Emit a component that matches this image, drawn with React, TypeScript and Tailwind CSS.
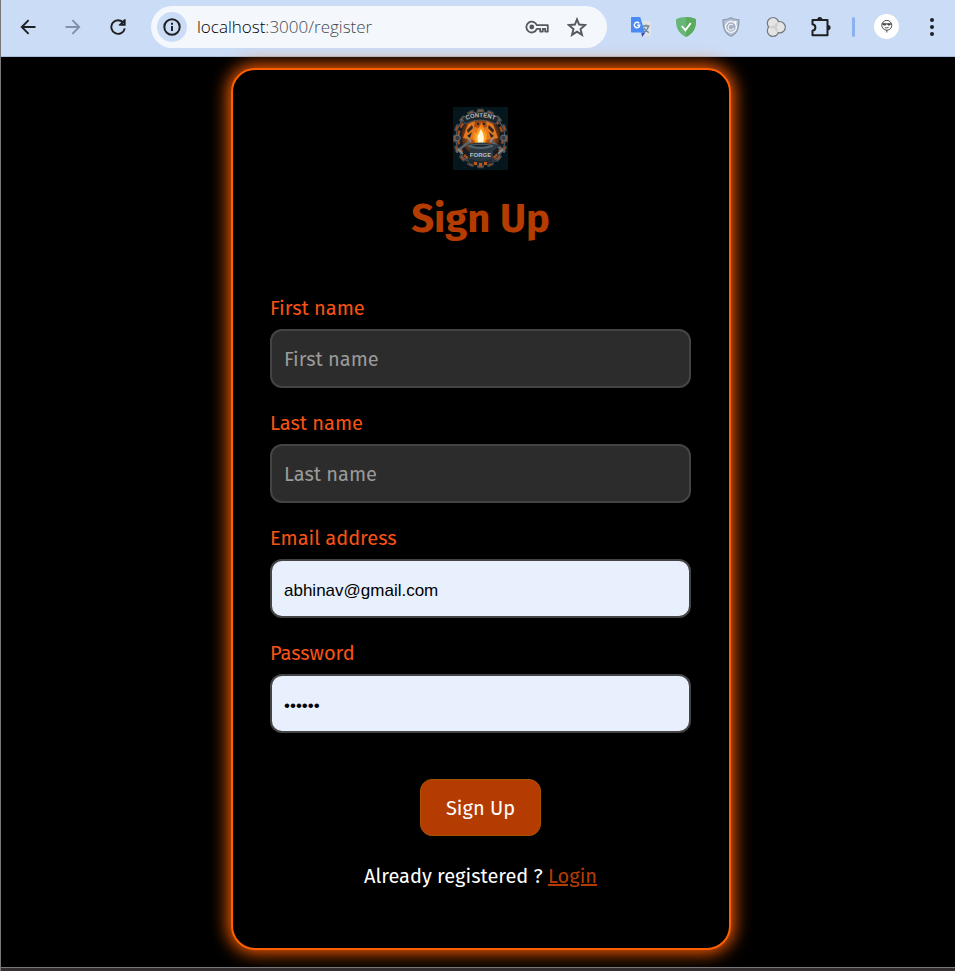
import React, { useState } from "react";

const uiFont = "font-['Fira_Sans','Noto_Sans_CJK_SC','Noto_Sans',sans-serif]";

function ArrowIcon({ flip = false }: { flip?: boolean }) {
  return (
    <svg viewBox="0 0 16 16" className={flip ? "size-4 rotate-180" : "size-4"} fill="none" stroke="currentColor" strokeWidth="1.9">
      <path d="M15.5 8H2M8.6 1.2 1.8 8l6.8 6.8" />
    </svg>
  );
}

function ReloadIcon() {
  return (
    <svg viewBox="0 0 16 16" className="size-4" fill="none" stroke="currentColor" strokeWidth="1.9">
      <path d="M13.6 4A6.8 6.8 0 1 0 14.8 9.4" />
      <path d="M14.7.3v5.6H9.2M14.5 5.7 10.5 5.5 14.5 1.5" />
    </svg>
  );
}

function InfoIcon() {
  return (
    <svg viewBox="0 0 18 18" className="size-[18px]" fill="none" stroke="currentColor" strokeWidth="2">
      <circle cx="9" cy="9" r="7.7" />
      <path d="M9 8v5M9 4.8v2" />
    </svg>
  );
}

function KeyIcon() {
  return (
    <svg viewBox="0 0 24 14" className="h-[14px] w-6" fill="none" stroke="currentColor" strokeWidth="1.8">
      <path d="M11.8 5.2h11v6.4h-2.6V8.9h-2.4v2.7h-2.6V8.9h-3.4A5.4 5.4 0 1 1 11.8 5.2Z" strokeLinejoin="round" />
      <circle cx="6.8" cy="7" r="2.4" fill="currentColor" stroke="none" />
    </svg>
  );
}

function StarIcon() {
  return (
    <svg viewBox="0 0 20 20" className="size-5" fill="none" stroke="currentColor" strokeWidth="1.9">
      <path d="m10 2.4 2.1 5.1 6.1.5-4.7 4 1.5 5.8L10 14.6 5 17.8 6.5 12 1.8 8l6.1-.5Z" />
    </svg>
  );
}

function TranslateIcon() {
  return (
    <svg viewBox="0 0 20 20" className="size-5">
      <path d="M8 4h11.2a.8.8 0 0 1 .8.8v14a.8.8 0 0 1-.8.8H13Z" fill="#dfe2e6" />
      <path d="M11.5 9h7M15 7.5V9M17.5 9c-.5 3-2.2 5-4.4 6.500M13 10.800c1 2.200 2.600 3.900 4.800 4.900" fill="none" stroke="#6d8790" strokeWidth="1.3" />
      <path d="M10.2 15.6h4.2l-3.2 4.400Z" fill="#3949ab" />
      <path d="M.8 0h8.4l4.8 15.600H.8a.8.8 0 0 1-.8-.8V.8A.8.8 0 0 1 .8 0Z" fill="#4a8af4" />
      <path d="M8.2 6.4A2.7 2.7 0 1 0 8.7 8.300H6.2" fill="none" stroke="#fff" strokeWidth="1.4" />
    </svg>
  );
}

function GreenShieldIcon() {
  return (
    <svg viewBox="0 0 20 20" className="size-5">
      <path d="M10 0c3.2 0 7 .8 10 2.2 0 7-.8 13.3-10 17.8C.8 15.5 0 9.200 0 2.200 3 .8 6.800 0 10 0Z" fill="#67b778" />
      <path d="M10 0c3.2 0 7 .8 10 2.2 0 7-.8 13.3-10 17.800Z" fill="#5bab5e" />
      <path d="m5.8 9 3.6 4.2L14.8 6" fill="none" stroke="#fff" strokeWidth="1.8" />
    </svg>
  );
}

function GreyShieldIcon() {
  return (
    <svg viewBox="0 0 18 20" className="h-5 w-[18px]">
      <path d="M9 .7c2.5 1.3 5 2 8 2.100 0 7-.8 12.700-8 16.500C1.800 15.500 1 9.800 1 2.800 4 2.700 6.500 2 9 .7Z" fill="#b4bfd2" stroke="#8c99b0" strokeWidth="1.2" />
      <circle cx="9" cy="10" r="5.4" fill="#a3afc2" stroke="#f1f4f9" strokeWidth="1.5" />
      <path d="M10.800 8A2.800 2.800 0 1 0 11.800 10.600" fill="none" stroke="#edf1f7" strokeWidth="1.2" />
      <circle cx="13.4" cy="5.4" r="1.3" fill="#f7f9fc" />
    </svg>
  );
}

function CirclesIcon() {
  return (
    <svg viewBox="0 0 20 20" className="size-5">
      <g fill="#e4e4e4" stroke="#77797c" strokeWidth="1.6">
        <circle cx="7" cy="6.3" r="5.5" />
        <circle cx="7" cy="13.7" r="5.5" />
        <circle cx="13.6" cy="10.3" r="5.5" />
      </g>
      <g fill="#e4e4e4">
        <circle cx="7" cy="6.3" r="5" />
        <circle cx="7" cy="13.7" r="5" />
        <circle cx="13.6" cy="10.3" r="5" />
      </g>
      <path d="M3.5 10c2-1.800 5-1.800 7 0-2 1.800-5 1.800-7 0ZM8.400 8.500c.8-1.600 2-2.600 3.200-2.800.4 1.600 0 3-1.300 4.300ZM8.400 11.700c.8 1.600 2 2.800 3.200 3.100.4-1.600 0-3.300-1.300-4.800Z" fill="#cdcdcd" />
    </svg>
  );
}

function PuzzleIcon() {
  return (
    <svg viewBox="0 0 20 20" className="size-5">
      <path d="M1.500 2.900h15v15.300h-15v-4.400c3.800-.6 3.800-5.900 0-6.500Z" fill="none" stroke="#1f2023" strokeWidth="2" strokeLinejoin="round" />
      <path d="M6.300 2.500a2.500 2.500 0 0 1 5 0ZM17 8a2.600 2.600 0 0 1 0 5.200Z" fill="#1f2023" />
    </svg>
  );
}

function AvatarIcon() {
  return (
    <svg viewBox="0 0 25 25" className="size-[25px]" fill="none" stroke="#222" strokeWidth=".8">
      <circle cx="12.5" cy="12.5" r="12.5" fill="#fff" stroke="none" />
      <ellipse cx="12.8" cy="11.3" rx="5" ry="4.9" />
      <path d="M8.2 9.800h8.900M9 10.200h2.800v.8H9.400ZM13.800 10.200h2.600l-.5.8h-2Z" />
      <path d="M10.800 13.700q2 .6 3.800-.4M12.800 16.200V18.500" />
    </svg>
  );
}

function ForgeLogo() {
  const teeth = Array.from({ length: 16 }, (_, i) => i * 22.5);
  return (
    <svg viewBox="0 0 55 63" className="h-[63px] w-[55px]" role="img" aria-label="Content Forge">
      <defs>
        <radialGradient id="fire" cx="50%" cy="72%" r="65%">
          <stop offset="0" stopColor="#fff6c4" />
          <stop offset=".35" stopColor="#ffb02e" />
          <stop offset="1" stopColor="#ee6a0a" />
        </radialGradient>
        <radialGradient id="glow">
          <stop offset="0" stopColor="#d9640f" />
          <stop offset=".7" stopColor="#9c4512" />
          <stop offset="1" stopColor="#3a2417" />
        </radialGradient>
        <path id="topArc" d="M11 14Q27.500 6.500 44 14" />
      </defs>
      <rect width="55" height="63" fill="#06161d" />
      <g transform="translate(27.500 31.500) scale(1 1.080) translate(-27.500 -31)">
        {teeth.map((a) => (
          <g key={a} transform={`rotate(${a} 27.500 31)`}>
            <rect x="24" y="3.500" width="7" height="6" rx="1" fill="#3c464d" />
            <rect x="25.500" y="4.500" width="4" height="3" fill="#a54c1a" />
          </g>
        ))}
        <circle cx="27.5" cy="31" r="24.5" fill="#171d22" stroke="#4c565d" strokeWidth="1.2" />
        <circle cx="27.5" cy="31" r="22.3" fill="none" stroke="#a54c1a" strokeWidth="2.4" strokeDasharray="5 3" />
      </g>
      <ellipse cx="27.5" cy="29" rx="19.5" ry="20" fill="url(#glow)" />
      <path d="M10 31l5-14 7-3-1 6 5 1-5 12ZM45 31l-5-14-7-3 1 6-5 1 5 12Z" fill="#e5761b" />
      <path d="M14 23l5-5 1 3-5 5ZM41 23l-5-5-1 3 5 5ZM14 29l5-4-2 6ZM41 29l-5-4 2 6Z" fill="#2b2723" />
      <path d="M24 16h2v2h-2ZM30 16h2v2h-2Z" fill="#1d262c" />
      <path d="M9 11Q27.500-2 46 11L43 17Q27.500 9 12 17Z" fill="#1d262c" stroke="#59656c" strokeWidth=".7" />
      <text fontSize="6" fontWeight="700" fill="#b4bcc0" className="font-['Liberation_Sans',sans-serif]">
        <textPath href="#topArc" startOffset="50%" textAnchor="middle">CONTENT</textPath>
      </text>
      <path d="M3 45 17 34M52 45 38 34" stroke="#59646b" strokeWidth="2.4" />
      <path d="M5 42l5 5M50 42l-5 5M14 30l4 5M41 30l-4 5" stroke="#8b9295" strokeWidth="1.6" />
      <circle cx="4.5" cy="31" r="2.8" fill="#343d43" stroke="#68737a" />
      <circle cx="50.5" cy="31" r="2.8" fill="#343d43" stroke="#68737a" />
      <path d="M28 14c1 5 4 6 3 11l3-3c1 6 1 11-3 15h-7c-4-3-5-8-3-13l3 3c0-6 4-7 4-13Z" fill="url(#fire)" />
      <path d="M28 22c3 6 4 10 1 15h-3c-3-5-1-9 2-15Z" fill="#fff7d8" />
      <path d="M15 37Q27.500 34 40 37l8 1-8 6v7l4 4H13l4-5v-7Z" fill="#2c3841" />
      <path d="M15 38Q27.500 36 40 38v2Q27.500 44 15 40Z" fill="#51616b" />
      <path d="M18 38.500Q27.500 37 37 38.500 27.500 41 18 38.500Z" fill="#17222b" />
      <text x="27.5" y="49.500" fontSize="6" fontWeight="700" textAnchor="middle" fill="#b9c1c5" className="font-['Liberation_Sans',sans-serif]">FORGE</text>
      <path d="M17 52Q27.500 56 38 52l2 4Q27.500 61 15 56Z" fill="#222a30" />
      <path d="M21 55h3v3h-3zM26 56h3v3h-3zM31 55h3v3h-3z" fill="#b8581b" />
    </svg>
  );
}

const extensions = [
  { label: "Google Translate", icon: <TranslateIcon /> },
  { label: "Ad blocker", icon: <GreenShieldIcon /> },
  { label: "Privacy shield", icon: <GreyShieldIcon /> },
  { label: "Cookie manager", icon: <CirclesIcon /> },
  { label: "Extensions", icon: <PuzzleIcon /> },
];

function BarButton({ label, children, className = "" }: { label: string; children: React.ReactNode; className?: string }) {
  return (
    <button type="button" aria-label={label} className={`flex h-10 w-[45px] shrink-0 items-center justify-center ${className}`}>
      {children}
    </button>
  );
}

function BrowserBar() {
  const [url, setUrl] = useState("localhost:3000/register");
  const colon = url.indexOf(":");
  const host = colon < 0 ? url : url.slice(0, colon);
  const rest = colon < 0 ? "" : url.slice(colon);
  return (
    <header className="flex h-[57px] items-center border-b border-[#a9bfdc] bg-[#cbdcf6] pr-px pb-[3px] pl-1 text-[#1f2023]">
      <BarButton label="Back"><ArrowIcon /></BarButton>
      <BarButton label="Forward" className="text-[#838fa8]"><ArrowIcon flip /></BarButton>
      <BarButton label="Reload"><ReloadIcon /></BarButton>
      <div className="mr-[11px] ml-[11px] flex h-[42px] min-w-0 flex-1 items-center rounded-full bg-[#f4f8fd] pr-[10px] pl-[6px]">
        <button type="button" aria-label="Site information" className="flex size-[30px] shrink-0 items-center justify-center rounded-full bg-[#cbdcf6]">
          <InfoIcon />
        </button>
        <div
          role="textbox"
          aria-label="Address"
          contentEditable
          suppressContentEditableWarning
          onBlur={(e) => setUrl(e.currentTarget.textContent ?? "")}
          className="ml-[10px] min-w-0 flex-1 truncate font-['Open_Sans',sans-serif] text-[17px] leading-6 font-light text-black outline-none"
        >
          {host}
          <span className="text-[#45484c]">{rest}</span>
        </div>
        <button type="button" aria-label="Passwords" className="flex w-10 shrink-0 justify-center text-[#55585d]"><KeyIcon /></button>
        <button type="button" aria-label="Bookmark" className="flex w-10 shrink-0 justify-center text-[#55585d]"><StarIcon /></button>
      </div>
      {extensions.map((e) => (
        <BarButton key={e.label} label={e.label}>{e.icon}</BarButton>
      ))}
      <div className="flex w-[21px] shrink-0 justify-center">
        <div className="h-5 w-[3px] rounded-full bg-[#8bb2ef]" />
      </div>
      <BarButton label="Profile"><AvatarIcon /></BarButton>
      <BarButton label="Menu">
        <svg viewBox="0 0 4 18" className="h-[18px] w-1" fill="currentColor">
          <circle cx="2" cy="2" r="2" />
          <circle cx="2" cy="9" r="2" />
          <circle cx="2" cy="16" r="2" />
        </svg>
      </BarButton>
    </header>
  );
}

type FieldProps = { id: string; label: string; type?: string; value?: string; filled?: boolean };

function Field({ id, label, type = "text", value, filled = false }: FieldProps) {
  const look = filled
    ? "bg-[#e8f0fe] pt-1 font-['Liberation_Sans',sans-serif] text-[17px] text-black"
    : "bg-[#2c2c2c] text-xl text-white placeholder:text-[#9a9a9a]";
  return (
    <div>
      <label htmlFor={id} className="block text-xl leading-6 text-[#f95314]">{label}</label>
      <input
        id={id}
        type={type}
        defaultValue={value}
        placeholder={label}
        className={`mt-[9px] block h-[59px] w-full rounded-xl border-2 border-[#444444] px-3 outline-none ${look}`}
      />
    </div>
  );
}

export default function App() {
  return (
    <div className="flex min-h-screen flex-col border-l border-[#777777] bg-black">
      <BrowserBar />
      <main className={`flex flex-1 justify-center pt-[11px] pb-[17px] pl-[6px] ${uiFont}`}>
        <form
          onSubmit={(e) => e.preventDefault()}
          className="flex w-full max-w-[500px] flex-col items-center rounded-3xl border-2 border-[#ff5f00] bg-black pt-[37px] pr-[38px] pb-[60px] pl-[37px] shadow-[0_0_17px_3px_#ff5f00]"
        >
          <ForgeLogo />
          <h1 className="mt-[19px] text-[40px] leading-[60px] font-bold text-[#b43c00]">Sign Up</h1>
          <div className="mt-[47px] flex w-full flex-col gap-[23px]">
            <Field id="first" label="First name" />
            <Field id="last" label="Last name" />
            <Field id="email" label="Email address" type="email" value="abhinav@gmail.com" filled />
            <Field id="password" label="Password" type="password" value="secret" filled />
          </div>
          <button type="submit" className="mt-[46px] h-[57px] rounded-xl border border-[#a85400] bg-[#b43c00] px-[25px] text-xl text-white">
            Sign Up
          </button>
          <p className="mt-7 text-xl leading-6 text-white">
            Already registered ? <a href="#login" className="text-[#b43c00] underline">Login</a>
          </p>
        </form>
      </main>
      <footer className="h-1 border-t border-[#777777] bg-[#332f31]" />
    </div>
  );
}
